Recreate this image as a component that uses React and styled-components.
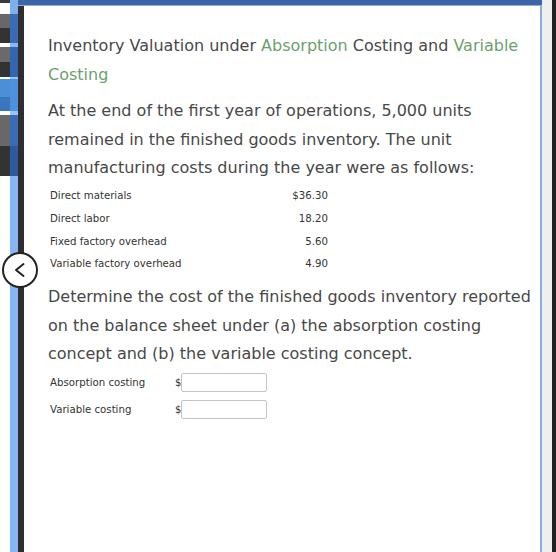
import React from 'react'
import styled, { createGlobalStyle } from 'styled-components'

const GlobalStyle = createGlobalStyle`
  html, body {
    margin: 0;
    padding: 0;
    background: #ffffff;
  }
  body {
    font-family: "DejaVu Sans", Verdana, sans-serif;
  }
`

const stripBlocks = [
  { h: 3, c: '#3a3a3a' },
  { h: 11, c: '#ffffff' },
  { h: 14, c: '#686868' },
  { h: 15, c: '#333333' },
  { h: 4, c: '#ffffff' },
  { h: 15, c: '#6a6a6a' },
  { h: 15, c: '#333333' },
  { h: 2, c: '#ffffff' },
  { h: 18, c: '#4a8fd8' },
  { h: 14, c: '#3a76bd' },
  { h: 4, c: '#ffffff' },
  { h: 31, c: '#686868' },
  { h: 30, c: '#333333' },
]

const railBlocks = [
  { h: 14, c: '#7fb0ec' },
  { h: 29, c: '#3a6cb3' },
  { h: 4, c: '#8ab8f2' },
  { h: 30, c: '#3466ad' },
  { h: 2, c: '#9cc3f5' },
  { h: 32, c: '#4d90dc' },
  { h: 4, c: '#9cc3f5' },
  { h: 31, c: '#3a6cb3' },
  { h: 30, c: '#30599c' },
]

const costs = [
  { label: 'Direct materials', value: '$36.30' },
  { label: 'Direct labor', value: '18.20' },
  { label: 'Fixed factory overhead', value: '5.60' },
  { label: 'Variable factory overhead', value: '4.90' },
]

const answers = ['Absorption costing', 'Variable costing']

function App() {
  return (
    <>
      <GlobalStyle />
      <Page>
        <Strip>
          {stripBlocks.map((b, i) => (
            <Block key={i} $h={b.h} $c={b.c} />
          ))}
        </Strip>
        <Frame>
          <TopBar />
          <FrameBody>
            <BlueRail>
              {railBlocks.map((b, i) => (
                <Block key={i} $h={b.h} $c={b.c} />
              ))}
            </BlueRail>
            <DarkLine />
            <Content>
              <Title>
                Inventory Valuation under <Green>Absorption</Green> Costing and{' '}
                <Green>Variable Costing</Green>
              </Title>
              <Para>
                At the end of the first year of operations, 5,000 units remained in the
                finished goods inventory. The unit manufacturing costs during the year were
                as follows:
              </Para>
              <CostTable>
                {costs.map((row) => (
                  <React.Fragment key={row.label}>
                    <CostLabel>{row.label}</CostLabel>
                    <CostValue>{row.value}</CostValue>
                  </React.Fragment>
                ))}
              </CostTable>
              <Para>
                Determine the cost of the finished goods inventory reported on the balance
                sheet under (a) the absorption costing concept and (b) the variable costing
                concept.
              </Para>
              <AnswerList>
                {answers.map((a) => (
                  <AnswerRow key={a}>
                    <AnswerLabel>{a}</AnswerLabel>
                    <Dollar>$</Dollar>
                    <AnswerInput type="text" />
                  </AnswerRow>
                ))}
              </AnswerList>
            </Content>
            <LightLine />
          </FrameBody>
        </Frame>
        <GrayGutter />
        <DarkEdge />
        <BackButton aria-label="Back">
          <svg width="20" height="20" viewBox="0 0 20 20">
            <path d="M13.5 4 L6 10 L13.5 16" fill="none" stroke="#222" strokeWidth="2" strokeLinecap="round" strokeLinejoin="round" />
          </svg>
        </BackButton>
      </Page>
    </>
  )
}

const Page = styled.div`
  position: relative;
  display: flex;
  width: 556px;
  height: 552px;
  overflow: hidden;
  background: #ffffff;
`

const Strip = styled.div`
  width: 10px;
  display: flex;
  flex-direction: column;
  flex-shrink: 0;
`

const Block = styled.div`
  height: ${(p) => p.$h}px;
  background: ${(p) => p.$c};
  flex-shrink: 0;
`

const Frame = styled.div`
  flex: 1;
  display: flex;
  flex-direction: column;
`

const TopBar = styled.div`
  height: 5px;
  background: #3d64a6;
  border-bottom: 1px solid #8fb0de;
  flex-shrink: 0;
`

const FrameBody = styled.div`
  flex: 1;
  display: flex;
`

const BlueRail = styled.div`
  width: 8px;
  display: flex;
  flex-direction: column;
  background: #86b6f3;
  flex-shrink: 0;
  margin-top: -6px;
`

const DarkLine = styled.div`
  width: 6px;
  background: #2e2e30;
  flex-shrink: 0;
`

const Content = styled.div`
  flex: 1;
  padding: 26px 6px 0 24px;
  color: #484848;
`

const LightLine = styled.div`
  width: 2px;
  background: #8aaee2;
  flex-shrink: 0;
`

const GrayGutter = styled.div`
  width: 10px;
  background: #efefef;
  flex-shrink: 0;
`

const DarkEdge = styled.div`
  width: 4px;
  background: #222222;
  flex-shrink: 0;
`

const Title = styled.div`
  font-size: 16px;
  line-height: 28.5px;
  margin: 0;
`

const Green = styled.span`
  color: #6d9f6d;
`

const Para = styled.p`
  font-size: 16px;
  line-height: 28.5px;
  margin: 8px 0 0;
`

const CostTable = styled.div`
  display: grid;
  grid-template-columns: 1fr auto;
  width: 278px;
  margin: 2px 0 0 2px;
  grid-auto-rows: 22.7px;
  align-items: center;
`

const CostLabel = styled.div`
  font-size: 10.2px;
  color: #333;
`

const CostValue = styled.div`
  font-size: 10.2px;
  color: #333;
  text-align: right;
`

const AnswerList = styled.div`
  display: flex;
  flex-direction: column;
  margin: 0 0 0 2px;
`

const AnswerRow = styled.div`
  display: flex;
  align-items: center;
  height: 27px;
`

const AnswerLabel = styled.div`
  width: 125px;
  font-size: 10.2px;
  color: #333;
`

const Dollar = styled.span`
  font-size: 10px;
  color: #333;
  width: 6px;
`

const AnswerInput = styled.input`
  width: 86px;
  height: 19px;
  box-sizing: border-box;
  border: 1px solid #c4c4c4;
  border-radius: 2px;
  padding: 0 3px;
  margin: 0;
  background: #fff;
  outline: none;
`

const BackButton = styled.button`
  position: absolute;
  left: 2px;
  top: 252px;
  width: 36px;
  height: 36px;
  border-radius: 50%;
  border: 2px solid #222;
  background: #fff;
  display: flex;
  align-items: center;
  justify-content: center;
  padding: 0;
  box-sizing: border-box;
  cursor: pointer;
`

export default App
